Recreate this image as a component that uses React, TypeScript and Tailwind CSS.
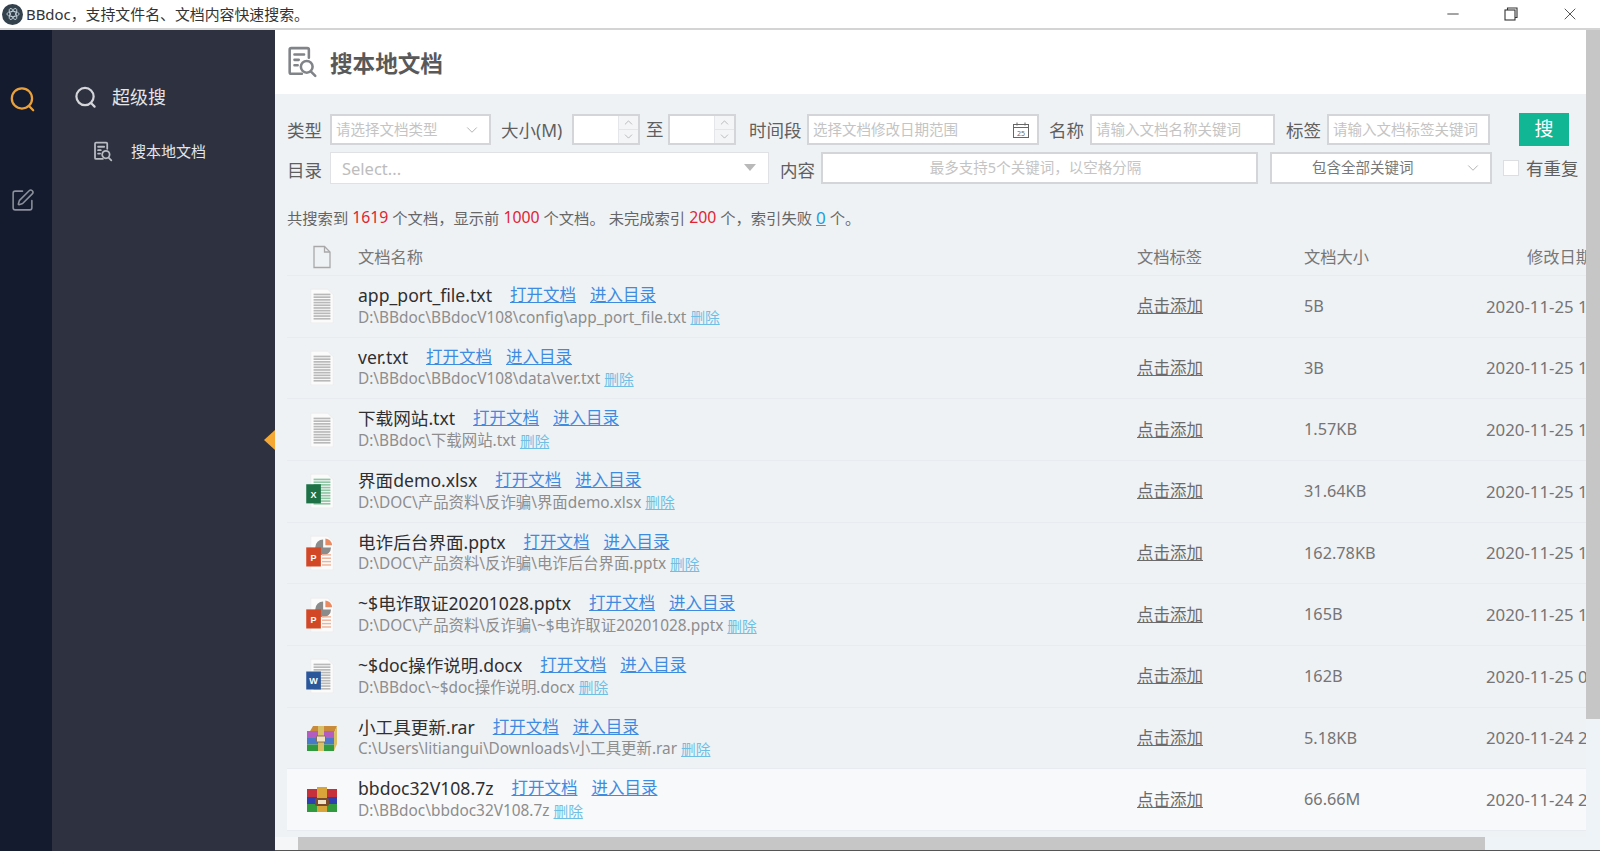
import { ChevronDown, ChevronUp, Minus, SquarePen, X } from "lucide-react"

type Kind = "txt" | "xlsx" | "pptx" | "docx" | "rar" | "7z"

interface Doc {
  name: string
  path: string
  size: string
  date: string
  kind: Kind
}

const docs: Doc[] = [
  { name: "app_port_file.txt", path: "D:\\BBdoc\\BBdocV108\\config\\app_port_file.txt", size: "5B", date: "2020-11-25 1", kind: "txt" },
  { name: "ver.txt", path: "D:\\BBdoc\\BBdocV108\\data\\ver.txt", size: "3B", date: "2020-11-25 1", kind: "txt" },
  { name: "下载网站.txt", path: "D:\\BBdoc\\下载网站.txt", size: "1.57KB", date: "2020-11-25 1", kind: "txt" },
  { name: "界面demo.xlsx", path: "D:\\DOC\\产品资料\\反诈骗\\界面demo.xlsx", size: "31.64KB", date: "2020-11-25 1", kind: "xlsx" },
  { name: "电诈后台界面.pptx", path: "D:\\DOC\\产品资料\\反诈骗\\电诈后台界面.pptx", size: "162.78KB", date: "2020-11-25 1", kind: "pptx" },
  { name: "~$电诈取证20201028.pptx", path: "D:\\DOC\\产品资料\\反诈骗\\~$电诈取证20201028.pptx", size: "165B", date: "2020-11-25 1", kind: "pptx" },
  { name: "~$doc操作说明.docx", path: "D:\\BBdoc\\~$doc操作说明.docx", size: "162B", date: "2020-11-25 0", kind: "docx" },
  { name: "小工具更新.rar", path: "C:\\Users\\litiangui\\Downloads\\小工具更新.rar", size: "5.18KB", date: "2020-11-24 2", kind: "rar" },
  { name: "bbdoc32V108.7z", path: "D:\\BBdoc\\bbdoc32V108.7z", size: "66.66M", date: "2020-11-24 2", kind: "7z" },
]

function SearchGlyph({ className, stroke = 2 }: { className?: string; stroke?: number }) {
  return (
    <svg viewBox="0 0 24 24" fill="none" stroke="currentColor" strokeWidth={stroke} strokeLinecap="round" className={className}>
      <circle cx="11.5" cy="11" r="9" />
      <path d="M18 18l3.5 3.5" />
    </svg>
  )
}

function DocSearchGlyph({ className, stroke = 2 }: { className?: string; stroke?: number }) {
  return (
    <svg viewBox="0 0 28 30" fill="none" stroke="currentColor" strokeWidth={stroke} strokeLinecap="round" className={className}>
      <path d="M13 26H3a1.5 1.5 0 0 1-1.5-1.5v-21A1.5 1.5 0 0 1 3 2h15a1.500 1.500 0 0 1 1.500 1.500V11" />
      <path d="M6 8h9M6 13h4M6 18h3" />
      <circle cx="17.500" cy="19.500" r="5.500" />
      <path d="M21.500 24l4 4" />
    </svg>
  )
}

function FileIcon({ kind }: { kind: Kind }) {
  if (kind === "rar") {
    return (
      <svg viewBox="0 0 32 28" className="h-[28px] w-[32px]">
        <path d="M3 9l4-7h24l-3 7z" fill="#c98a3a" />
        <rect x="1" y="7" width="27" height="7" fill="#b45cc0" />
        <rect x="1" y="14" width="27" height="6.500" fill="#4a79c9" />
        <rect x="1" y="20.500" width="27" height="6.500" fill="#2f9a3e" />
        <rect x="12" y="2" width="6" height="25" fill="#d9c067" />
        <rect x="10.500" y="12" width="9" height="6" rx="1" fill="#f1e3c5" stroke="#7a5a3c" strokeWidth="0.800" />
        <path d="M28 9l3-7v18l-3 7z" fill="#d9c067" />
      </svg>
    )
  }
  if (kind === "7z") {
    return (
      <svg viewBox="0 0 32 28" className="h-[28px] w-[32px]">
        <rect x="1" y="3" width="30" height="8" fill="#c5303a" />
        <rect x="1" y="11" width="30" height="7" fill="#2f3fb0" />
        <rect x="1" y="18" width="30" height="8" fill="#2f9a3e" />
        <rect x="11" y="1" width="10" height="25" fill="#d9a43a" />
        <rect x="9" y="12" width="14" height="8" rx="2" fill="#7a4a2c" />
        <rect x="12" y="14" width="8" height="4" fill="#f1e3c5" />
      </svg>
    )
  }
  const lineColor = kind === "txt" ? "#b9b9b9" : kind === "xlsx" ? "#8fc7a5" : kind === "pptx" ? "#f0b49a" : "#b9b9b9"
  const lines = [5, 7.400, 9.800, 12.200, 14.600, 17, 19.400, 21.800, 24.200, 26.600]
  return (
    <svg viewBox="0 0 30 32" className="h-[36px] w-[34px]">
      <path d="M5 1h15l5 5v25H5z" fill="#fbfbfb" stroke="#e8e8e8" strokeWidth="0.600" />
      {kind === "pptx" ? (
        <>
          <path d="M16 4a7 7 0 1 0 7 7h-7z" fill="#8b8b8b" />
          <path d="M18 3a7 7 0 0 1 6 6h-6z" fill="#e98a63" />
          {[17, 20, 23, 26].map((y) => (
            <rect key={y} x="15" y={y} width="8" height="1.300" fill={lineColor} />
          ))}
        </>
      ) : (
        lines.map((y) => <rect key={y} x="7.500" y={y} width="15" height="1.500" fill={lineColor} />)
      )}
      {kind === "xlsx" && (
        <>
          <rect x="1" y="10" width="13" height="17" fill="#1d7145" />
          <text x="7.500" y="22" textAnchor="middle" fontSize="8" fontWeight="700" fill="#fff" fontFamily="Liberation Sans">X</text>
        </>
      )}
      {kind === "pptx" && (
        <>
          <rect x="1" y="11" width="13" height="17" fill="#d24726" />
          <text x="7.500" y="23" textAnchor="middle" fontSize="8" fontWeight="700" fill="#fff" fontFamily="Liberation Sans">P</text>
        </>
      )}
      {kind === "docx" && (
        <>
          <rect x="1" y="12" width="13" height="16" fill="#2b579a" />
          <text x="7.500" y="23.500" textAnchor="middle" fontSize="8" fontWeight="700" fill="#fff" fontFamily="Liberation Sans">W</text>
        </>
      )}
    </svg>
  )
}

function NumberBox() {
  return (
    <div className="flex h-[31px] w-[68px] border-2 border-[#d3d5d8] bg-white">
      <div className="flex-1" />
      <div className="flex w-[20px] flex-col border-l border-[#e4e6e9] bg-[#f4f5f6] text-[#8a8a8a]">
        <div className="flex flex-1 items-center justify-center border-b border-[#e4e6e9]">
          <ChevronUp size={13} strokeWidth={1} />
        </div>
        <div className="flex flex-1 items-center justify-center">
          <ChevronDown size={13} strokeWidth={1} />
        </div>
      </div>
    </div>
  )
}

function Label({ children, className = "" }: { children: string; className?: string }) {
  return <span className={`whitespace-nowrap text-[17.500px] leading-[31px] text-[#5f5f5f] ${className}`}>{children}</span>
}

function TextBox({ width, text }: { width: string; text: string }) {
  return (
    <div className={`flex h-[31px] items-center whitespace-nowrap border-2 border-[#d3d5d8] bg-white pl-[4px] text-[14.500px] text-[#c4c4c4] ${width}`}>
      {text}
    </div>
  )
}

function DocRow({ doc, last }: { doc: Doc; last: boolean }) {
  return (
    <div className={`flex h-[61.670px] items-center border-b border-[#e8ebef] ${last ? "bg-[#f8f9fb]" : ""}`}>
      <div className="flex w-[69px] shrink-0 justify-center">
        <FileIcon kind={doc.kind} />
      </div>
      <div className="ml-[2px] flex w-[779px] shrink-0 flex-col">
        <div className="flex h-[22px] items-center whitespace-nowrap">
          <span className="mr-[18px] text-[17.600px] text-[#2f2f2f]">{doc.name}</span>
          <span className="mr-[14px] text-[16.500px] text-[#3f8be0] underline">打开文档</span>
          <span className="text-[16.500px] text-[#3f8be0] underline">进入目录</span>
        </div>
        <div className="flex h-[22px] items-center whitespace-nowrap text-[#8d8d8d]">
          <span className="mr-[4px] text-[15.400px]">{doc.path}</span>
          <span className="text-[14.700px] text-[#6fbfe4] underline">删除</span>
        </div>
      </div>
      <span className="w-[167px] shrink-0 pt-[1px] text-[16.500px] text-[#6b6b6b] underline">点击添加</span>
      <span className="w-[182px] shrink-0 text-[16.300px] text-[#757575]">{doc.size}</span>
      <span className="whitespace-nowrap text-[16.800px] text-[#757575]">{doc.date}</span>
    </div>
  )
}

export default function App() {
  return (
    <div className="flex h-[851px] w-[1600px] flex-col overflow-hidden bg-white font-['Noto_Sans','Noto_Sans_CJK_SC',sans-serif]">
      {/* title bar */}
      <div className="flex h-[30px] shrink-0 items-center border-b-2 border-[#d4d4d4] pl-[2px]">
        <div className="mr-[3px] flex h-[21px] w-[21px] items-center justify-center rounded-full bg-[#33414d]">
          <svg viewBox="0 0 16 16" fill="none" stroke="#c3d1da" strokeWidth="1" className="h-[14px] w-[14px]">
            <ellipse cx="8" cy="8" rx="7" ry="3" />
            <ellipse cx="8" cy="8" rx="7" ry="3" transform="rotate(60 8 8)" />
            <ellipse cx="8" cy="8" rx="7" ry="3" transform="rotate(120 8 8)" />
          </svg>
        </div>
        <span className="text-[14.900px] text-[#333333]">BBdoc，支持文件名、文档内容快速搜索。</span>
        <div className="ml-auto flex items-center text-[#333333]">
          <Minus size={18} strokeWidth={1.200} />
          <svg viewBox="0 0 14 14" fill="none" stroke="currentColor" strokeWidth="1.100" className="ml-[42px] h-[14px] w-[14px]">
            <rect x="1" y="3" width="10" height="10" />
            <path d="M3.500 3V1H13v9.500h-2" />
          </svg>
          <X size={20} strokeWidth={1} className="mb-[1px] ml-[42px] mr-[20px]" />
        </div>
      </div>

      <div className="flex min-h-0 flex-1">
        {/* icon rail */}
        <div className="flex w-[52px] shrink-0 flex-col items-center bg-[#151b2e] pr-[7px] pt-[56px]">
          <SearchGlyph className="h-[27px] w-[27px] text-[#e9a13b]" />
          <SquarePen size={25} strokeWidth={1.500} className="mt-[75px] text-[#8a8f9a]" />
        </div>

        {/* sidebar */}
        <div className="relative flex w-[223px] shrink-0 flex-col bg-[#2d3140]">
          <div className="mt-[53px] flex h-[28px] items-center pl-[22px] text-[#e4e5e8]">
            <SearchGlyph stroke={2.300} className="mr-[15px] h-[23px] w-[23px] text-[#d5d6da]" />
            <span className="text-[18px]">超级搜</span>
          </div>
          <div className="mt-[28px] flex h-[24px] items-center pl-[42px] text-[#e4e5e8]">
            <DocSearchGlyph stroke={2.600} className="mr-[18px] h-[21px] w-[19px] text-[#b9bcc3]" />
            <span className="text-[15px]">搜本地文档</span>
          </div>
          <div className="absolute right-0 top-[400px] h-0 w-0 border-y-[10px] border-r-[11px] border-y-transparent border-r-[#f5a833]" />
        </div>

        {/* main */}
        <div className="flex min-w-0 flex-1 flex-col">
          <div className="flex min-h-0 flex-1">
            <div className="flex min-w-0 flex-1 flex-col overflow-hidden bg-[#eff2f5]">
              <div className="flex h-[64px] shrink-0 items-center bg-white pl-[13px] pt-[1px]">
                <DocSearchGlyph stroke={2.400} className="mb-[2px] mr-[12px] h-[32px] w-[30px] text-[#808488]" />
                <span className="pt-[2px] text-[22.600px] font-bold text-[#595959]">搜本地文档</span>
              </div>

              {/* filters */}
              <div className="mt-[20px] flex h-[31px] items-center pl-[12px]">
                <Label className="w-[43px] pt-[1px]">类型</Label>
                <div className="flex h-[31px] w-[161px] items-center justify-between border-2 border-[#d3d5d8] bg-white pl-[4px] pr-[8px] text-[14.500px] text-[#c4c4c4]">
                  请选择文档类型
                  <ChevronDown size={18} strokeWidth={1} className="text-[#9a9a9a]" />
                </div>
                <Label className="ml-[10px] w-[71px] pt-[1px]">大小(M)</Label>
                <NumberBox />
                <Label className="ml-[6px] w-[22px]">至</Label>
                <NumberBox />
                <Label className="ml-[13px] w-[58px] pt-[1px]">时间段</Label>
                <div className="relative">
                  <TextBox width="w-[232px]" text="选择文档修改日期范围" />
                  <svg viewBox="0 0 18 18" fill="none" stroke="#666666" strokeWidth="1" className="absolute right-[9px] top-[7px] h-[18px] w-[18px]">
                    <rect x="1.500" y="3.500" width="15" height="13" />
                    <path d="M1.500 6.500h15M5 1.500v3M13 1.500v3" />
                    <text x="9" y="14.500" textAnchor="middle" fontSize="7" fill="#666666" stroke="none">25</text>
                  </svg>
                </div>
                <Label className="ml-[10px] w-[41px] pt-[1px]">名称</Label>
                <TextBox width="w-[185px]" text="请输入文档名称关键词" />
                <Label className="ml-[11px] w-[41px] pt-[1px]">标签</Label>
                <TextBox width="w-[163px]" text="请输入文档标签关键词" />
                <div className="ml-[29px] flex h-[33px] w-[50px] items-center justify-center bg-[#11b795] text-[19px] text-white">搜</div>
              </div>
              <div className="mt-[7px] flex h-[32px] items-center pl-[12px]">
                <Label className="w-[43px] pt-[5px]">目录</Label>
                <div className="flex h-[32px] w-[439px] items-center justify-between border border-[#dfe1e4] bg-white pl-[11px] pr-[12px] pt-[2px] text-[16.500px] text-[#bdbdbd]">
                  Select...
                  <div className="mb-[4px] h-0 w-0 border-x-[6px] border-t-[7px] border-x-transparent border-t-[#b9b9b9]" />
                </div>
                <Label className="ml-[11px] w-[41px] pt-[5px]">内容</Label>
                <div className="flex h-[32px] w-[437px] items-center justify-center border-2 border-[#d3d5d8] bg-white pr-[8px] text-[14.500px] text-[#c4c4c4]">
                  最多支持5个关键词，以空格分隔
                </div>
                <div className="ml-[12px] flex h-[32px] w-[222px] items-center border-2 border-[#d3d5d8] bg-white pr-[8px] text-[14.500px] text-[#777777]">
                  <span className="flex-1 pl-[40px]">包含全部关键词</span>
                  <ChevronDown size={18} strokeWidth={1} className="text-[#9a9a9a]" />
                </div>
                <div className="ml-[11px] mr-[7px] h-[16px] w-[16px] border border-[#dcdee1] bg-white" />
                <Label>有重复</Label>
              </div>

              <div className="mt-[22px] flex h-[24px] items-center whitespace-pre pl-[12px] text-[15.300px] text-[#666666]">
                共搜索到 <span className="text-[15.800px] text-[#e02433]">1619</span> 个文档，显示前 <span className="text-[15.800px] text-[#e02433]">1000</span> 个文档。 未完成索引 <span className="text-[15.800px] text-[#e02433]">200</span> 个，索引失败 <span className="text-[17px] text-[#1e9fdc] underline">0</span> 个。
              </div>

              {/* table */}
              <div className="ml-[12px] mt-[11px] flex min-h-0 flex-1 flex-col">
                <div className="flex h-[35px] shrink-0 items-center border-b border-[#e8ebef] pb-[2px] text-[16.300px] text-[#777777]">
                  <div className="flex w-[69px] shrink-0 justify-center">
                    <svg viewBox="0 0 20 24" fill="none" stroke="#a8a8a8" strokeWidth="1.300" className="h-[24px] w-[20px]">
                      <path d="M2 1.500h10.500l5.500 5.500v15.500H2z" />
                      <path d="M12.500 1.500V7H18" />
                    </svg>
                  </div>
                  <span className="ml-[2px] w-[779px] shrink-0">文档名称</span>
                  <span className="w-[167px] shrink-0">文档标签</span>
                  <span className="w-[223px] shrink-0">文档大小</span>
                  <span className="whitespace-nowrap">修改日期</span>
                </div>
                {docs.map((doc, i) => (
                  <DocRow key={doc.path} doc={doc} last={i === docs.length - 1} />
                ))}
              </div>
            </div>

            {/* vertical scrollbar */}
            <div className="flex w-[14px] shrink-0 flex-col bg-[#eef3f7]">
              <div className="h-[689px] bg-[#c6c6c6]" />
            </div>
          </div>

          {/* horizontal scrollbar */}
          <div className="flex h-[14px] shrink-0 border-b border-[#555555] bg-[#eef3f7]">
            <div className="w-[23px] bg-[#f4f6f8]" />
            <div className="w-[1187px] bg-[#c6c6c6]" />
          </div>
        </div>
      </div>
    </div>
  )
}
